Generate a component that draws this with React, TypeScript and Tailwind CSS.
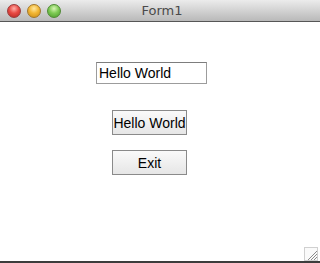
export default function App() {
  const font = { fontFamily: '"Lucida Grande", "DejaVu Sans", sans-serif' };
  return (
    <div className="relative w-[320px] h-[263px] bg-white flex flex-col overflow-hidden font-['Liberation_Sans',Arial,sans-serif]">
      {/* Title bar */}
      <div className="h-[22px] shrink-0 flex items-center relative border-b border-[#565656] bg-gradient-to-b from-[#ececec] to-[#b9b9b9]">
        <div className="flex items-center gap-[6px] pl-[7px]">
          <span className="w-[14px] h-[14px] rounded-full border border-[#9a3b3b] bg-[radial-gradient(circle_at_50%_30%,#ffb0a8_0%,#e94b45_45%,#b52620_100%)]" />
          <span className="w-[14px] h-[14px] rounded-full border border-[#a3772a] bg-[radial-gradient(circle_at_50%_30%,#ffe8a0_0%,#f2b735_45%,#c98a14_100%)]" />
          <span className="w-[14px] h-[14px] rounded-full border border-[#4f8a34] bg-[radial-gradient(circle_at_50%_30%,#d8f5b5_0%,#7fcb55_45%,#4a9a2a_100%)]" />
        </div>
        <div className="absolute inset-0 flex items-center justify-center text-[13px] text-[#4a4a4a] pl-[4px]" style={font}>
          Form1
        </div>
      </div>

      {/* Content */}
      <div className="flex-1 flex flex-col items-start">
        <div className="ml-[96px] mt-[40px] w-[111px] h-[22px] border border-[#9c9c9c] border-t-[#7d7d7d] bg-white flex items-center pl-[2px] pt-[1px] text-[14px] text-black">
          Hello World
        </div>
        <button className="ml-[112px] mt-[26px] w-[75px] h-[25px] border border-[#8a8a8a] bg-gradient-to-b from-[#fafafa] to-[#e6e6e6] text-[14px] text-black flex items-center justify-center pt-[2px]">
          Hello World
        </button>
        <button className="ml-[112px] mt-[15px] w-[75px] h-[25px] border border-[#8a8a8a] bg-gradient-to-b from-[#fafafa] to-[#e6e6e6] text-[14px] text-black flex items-center justify-center pt-[2px]">
          Exit
        </button>
      </div>

      {/* Bottom edge */}
      <div className="h-[2px] shrink-0 bg-[#3c3c3c]" />

      {/* Resize grip */}
      <svg className="absolute right-[2px] bottom-[2px]" width="14" height="14" viewBox="0 0 14 14">
        <rect x="0.5" y="0.5" width="13" height="13" fill="#fafafa" stroke="#d0d0d0" />
        <path d="M4 13 L13 4 M7 13 L13 7 M10 13 L13 10" stroke="#8c8c8c" strokeWidth="1" />
      </svg>
    </div>
  );
}
